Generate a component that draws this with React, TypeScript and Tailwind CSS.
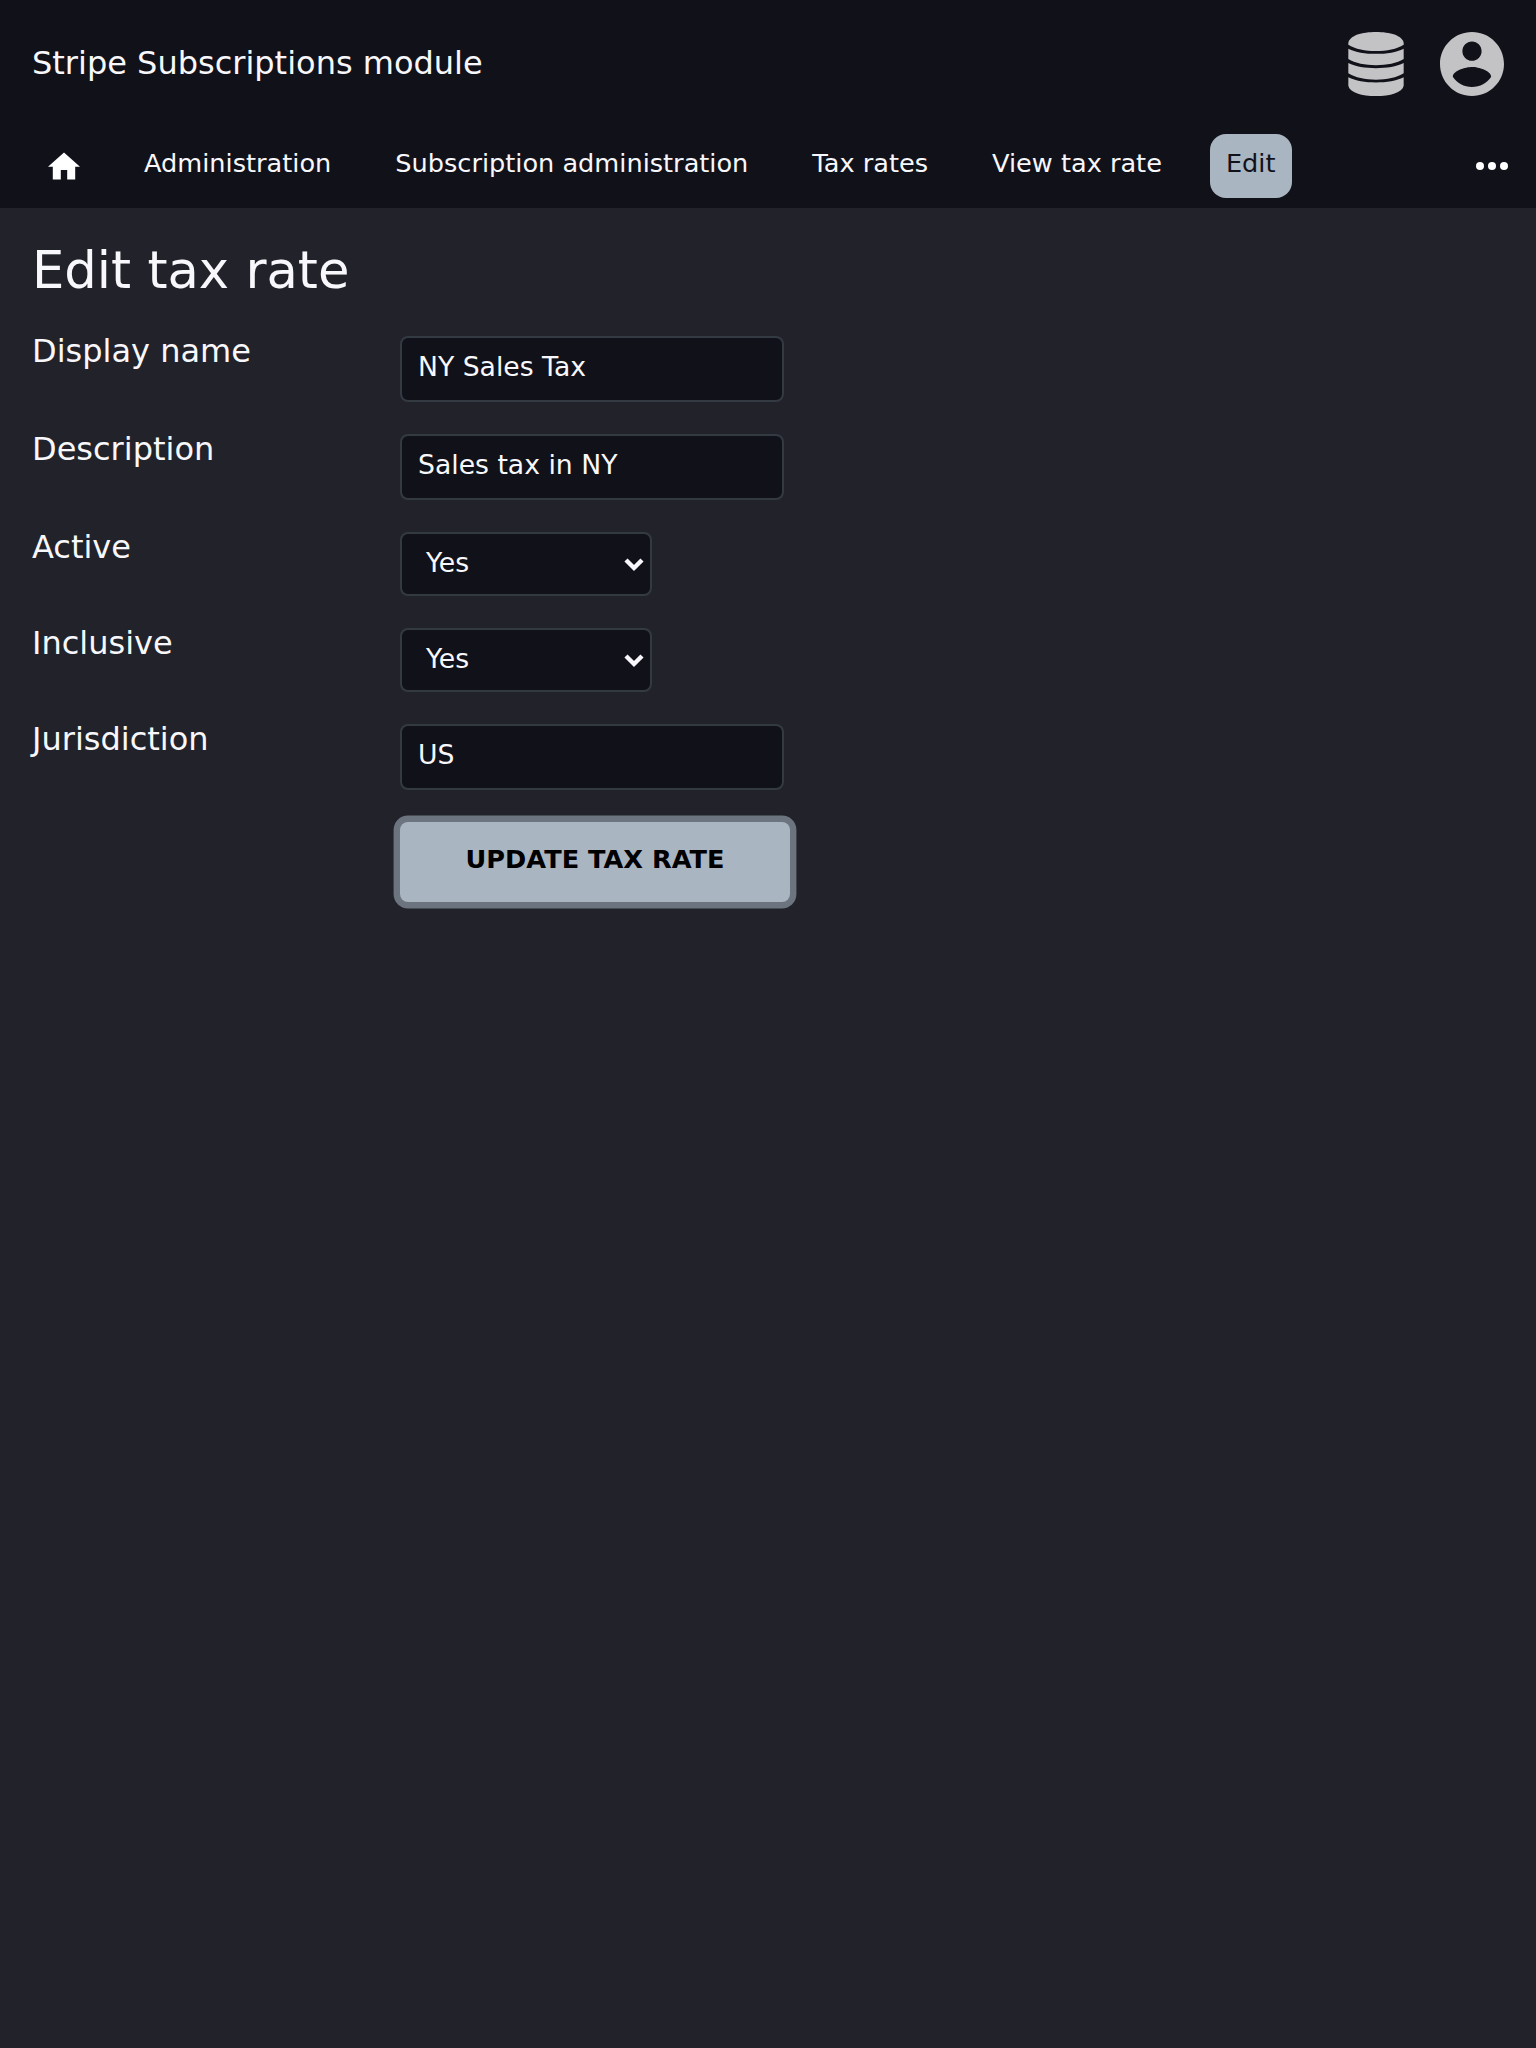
import React from "react";

function DatabaseIcon() {
  return (
    <svg className="h-16 w-14" viewBox="0 0 168 192" fill="currentColor">
      <path d="M1 33C5 10 42 0 84 0s79 10 83 33v5C147 51 116 57 84 57S21 51 1 38z" />
      <path d="M1 50C22 61 52 65.500 84 65.500S146 61 167 50v31C147 94 116 99.500 84 99.500S21 94 1 81z" />
      <path d="M1 93C22 104 52 108.500 84 108.500S146 104 167 93v31C147 137 116 143 84 143S21 137 1 124z" />
      <path d="M1 136C22 147 52 151.500 84 151.500S146 147 167 136v25C163 182 126 192 84 192S5 182 1 161z" />
    </svg>
  );
}

function AccountIcon() {
  return (
    <svg className="size-16" viewBox="2 2 20 20" fill="currentColor">
      <path d="M12 2C6.480 2 2 6.480 2 12s4.480 10 10 10 10-4.480 10-10S17.520 2 12 2zm0 3c1.660 0 3 1.340 3 3s-1.340 3-3 3-3-1.340-3-3 1.340-3 3-3zm0 14.200c-2.500 0-4.710-1.280-6-3.220.030-1.990 4-3.080 6-3.080 1.990 0 5.970 1.090 6 3.080-1.290 1.940-3.500 3.220-6 3.220z" />
    </svg>
  );
}

function NavItem({ label }: { label: string }) {
  return <a className="h-16 px-4 pt-[13px] leading-8">{label}</a>;
}

function Row({ label, children }: { label: string; children: React.ReactNode }) {
  return (
    <div className="mb-8 flex items-start">
      <label className="-mt-[3px] w-[368px] text-[32px] leading-9">{label}</label>
      {children}
    </div>
  );
}

function TextField({ value }: { value: string }) {
  return (
    <div className="h-[66px] w-96 rounded-lg border-2 border-[#343a42] bg-[#11111a] px-4 pt-[11px] text-[26.667px] leading-9">
      {value}
    </div>
  );
}

function SelectField({ value }: { value: string }) {
  return (
    <div className="flex h-16 w-[252px] items-start justify-between rounded-lg border-2 border-[#343a42] bg-[#11111a] pt-[11px] pr-1.5 pl-6 text-[26.667px] leading-9">
      {value}
      <svg className="mt-[13px] h-3.5 w-5" viewBox="0 0 20 14" fill="none" stroke="currentColor" strokeWidth="4.400">
        <path d="M2 2l8 8 8-8" />
      </svg>
    </div>
  );
}

export default function App() {
  return (
    <div className="min-h-[2048px] w-full bg-[#22222b] font-['DejaVu_Sans',sans-serif] text-[#f8f8fc]">
      <header className="h-[208px] bg-[#11111a]">
        <div className="flex h-32 items-center justify-between px-8">
          <span className="-mt-0.5 text-[32px] leading-9">Stripe Subscriptions module</span>
          <div className="flex gap-9 text-[#c3c3c6]">
            <DatabaseIcon />
            <AccountIcon />
          </div>
        </div>
        <nav className="flex items-start gap-8 pt-1.5 pr-7 pl-8 text-[25.6px]">
          <a className="h-16 w-16 px-4 pt-[18px] text-white">
            <svg className="h-7 w-8" viewBox="2 2.750 20 17.500" fill="currentColor">
              <path d="M10 20v-6h4v6h5v-8h3L12 3 2 12h3v8z" />
            </svg>
          </a>
          <NavItem label="Administration" />
          <NavItem label="Subscription administration" />
          <NavItem label="Tax rates" />
          <NavItem label="View tax rate" />
          <a className="h-16 w-[82px] rounded-2xl bg-[#a9b5c0] px-4 pt-[13px] leading-8 text-[#11111a]">Edit</a>
          <svg className="mt-7 ml-auto h-2 w-8 text-white" viewBox="0 0 32 8" fill="currentColor">
            <circle cx="4" cy="4" r="4" />
            <circle cx="16" cy="4" r="4" />
            <circle cx="28" cy="4" r="4" />
          </svg>
        </nav>
      </header>
      <main className="px-8">
        <h1 className="pt-8 pb-9 text-[51.2px] leading-[60px]">Edit tax rate</h1>
        <form>
          <Row label="Display name"><TextField value="NY Sales Tax" /></Row>
          <Row label="Description"><TextField value="Sales tax in NY" /></Row>
          <Row label="Active"><SelectField value="Yes" /></Row>
          <Row label="Inclusive"><SelectField value="Yes" /></Row>
          <Row label="Jurisdiction"><TextField value="US" /></Row>
          <button
            type="button"
            className="ml-[368px] flex h-20 w-[390px] items-start justify-center rounded-lg bg-[#a9b5c0] pt-[21px] text-[25.6px] leading-8 font-bold text-black ring-[6.4px] ring-[#6c757f]"
          >
            UPDATE TAX RATE
          </button>
        </form>
      </main>
    </div>
  );
}
